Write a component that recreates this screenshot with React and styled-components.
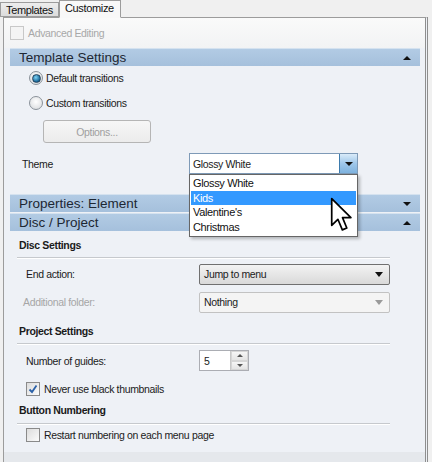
import React from 'react';
import styled, { createGlobalStyle } from 'styled-components';

const GlobalStyle = createGlobalStyle`
  html, body {
    margin: 0;
    padding: 0;
    background: #f0f0f0;
  }
  body {
    font-family: "Liberation Sans", Arial, sans-serif;
    font-size: 10.5px;
    letter-spacing: -0.35px;
    color: #1b1b1b;
  }
`;

// 전체 화면
const Screen = styled.div`
  position: relative;
  width: 432px;
  height: 462px;
  overflow: hidden;
  background: #f0f0f0;
`;

// 탭
const TabBar = styled.div`
  display: flex;
  align-items: flex-end;
  height: 17px;
  position: relative;
  z-index: 2;
`;

const Tab = styled.div`
  box-sizing: border-box;
  height: ${p => (p.$active ? 18 : 15)}px;
  padding: ${p => (p.$active ? '0 6px 3px 5px' : '0 5px')};
  display: flex;
  align-items: center;
  background: ${p => (p.$active ? '#f8f8f8' : 'linear-gradient(#ededed, #dcdcdc)')};
  border: 1px solid #9c9c9c;
  border-bottom: ${p => (p.$active ? '1px solid #f8f8f8' : '1px solid #9c9c9c')};
  margin-bottom: ${p => (p.$active ? '-1px' : '0')};
  font-size: 11px;
  color: #111;
`;

const Panel = styled.div`
  box-sizing: border-box;
  margin-left: 3px;
  width: 425px;
  height: 450px;
  border: 1px solid #9c9c9c;
  border-right: 3px double #8e8e8e;
  background: #eef1f6;
  display: flex;
  flex-direction: column;
`;

const TopArea = styled.div`
  height: 30px;
  background: linear-gradient(#fafafa, #f2f3f4);
  display: flex;
  align-items: center;
  padding-left: 6px;
  gap: 4px;
  color: #a8a8a8;
`;

const Box = styled.div`
  box-sizing: border-box;
  width: 14px;
  height: 14px;
  border: 1px solid ${p => (p.$disabled ? '#c8c8c8' : '#8a8a8a')};
  background: ${p => (p.$disabled ? '#f4f4f4' : 'linear-gradient(135deg, #dcdcdc, #fbfbfb)')};
  display: flex;
  align-items: center;
  justify-content: center;
  flex-shrink: 0;
`;

// 섹션 헤더
const SectionHeader = styled.div`
  box-sizing: border-box;
  margin: ${p => p.$gap || 0}px 5px 0 6px;
  height: 18px;
  background: linear-gradient(#b2cbe4, #a5c0dc);
  border-top: 1px solid #d5e2ef;
  display: flex;
  align-items: center;
  justify-content: space-between;
  padding: 0 9px 0 9px;
  font-size: 13.5px;
  letter-spacing: 0;
  color: #1d2733;
`;

const Arrow = styled.span`
  width: 0;
  height: 0;
  border-left: 4.5px solid transparent;
  border-right: 4.5px solid transparent;
  ${p => (p.$up ? 'border-bottom: 4.5px solid #111;' : 'border-top: 4.5px solid #111;')}
`;

const SectionBody = styled.div`
  margin: 0 5px 0 6px;
  display: flex;
  flex-direction: column;
`;

const RadioRow = styled.div`
  display: flex;
  align-items: center;
  gap: 3px;
  height: 14px;
  margin-top: ${p => p.$top}px;
  padding-left: 19px;
`;

const Radio = styled.div`
  box-sizing: border-box;
  width: 14px;
  height: 14px;
  border-radius: 50%;
  border: 1px solid #8a929a;
  background: radial-gradient(circle at 50% 40%, #ffffff, #d4d7da);
  display: flex;
  align-items: center;
  justify-content: center;
  &::after {
    content: '';
    display: ${p => (p.$checked ? 'block' : 'none')};
    width: 7px;
    height: 7px;
    border-radius: 50%;
    background: radial-gradient(circle at 40% 35%, #7fd3f5, #1b6b9c 65%, #0e3f66);
    border: 1px solid #24445f;
  }
`;

const OptionsButton = styled.div`
  box-sizing: border-box;
  margin: 10px 0 0 33px;
  width: 108px;
  height: 23px;
  border: 1px solid #b5b5b5;
  border-radius: 3px;
  background: linear-gradient(#f6f6f6, #ececec);
  color: #a0a0a0;
  display: flex;
  align-items: center;
  justify-content: center;
`;

const FieldRow = styled.div`
  display: flex;
  align-items: center;
  height: ${p => p.$h || 20}px;
  margin-top: ${p => p.$top}px;
  padding-left: ${p => p.$pad}px;
  color: ${p => (p.$muted ? '#a6a6a6' : '#1b1b1b')};
`;

const Label = styled.div`
  width: ${p => p.$w}px;
  flex-shrink: 0;
`;

const ThemeCombo = styled.div`
  position: relative;
  box-sizing: border-box;
  width: 169px;
  height: 21px;
  border: 1px solid #7e9ab7;
  background: #fff;
  display: flex;
  align-items: center;
  padding-left: 3px;
`;

const ComboButton = styled.div`
  position: absolute;
  right: 0;
  top: 0;
  bottom: 0;
  width: 18px;
  box-sizing: border-box;
  border-left: 1px solid #3d7bad;
  background: linear-gradient(#d9ebf9, #9fc7ea 50%, #7eb2de);
  display: flex;
  align-items: center;
  justify-content: center;
`;

const DropList = styled.div`
  position: absolute;
  left: 189px;
  top: 174px;
  width: 169px;
  box-sizing: border-box;
  border: 1px solid #666;
  background: #fff;
  padding: 1px 0 2px;
  box-shadow: 2px 2px 3px rgba(0, 0, 0, 0.25);
  z-index: 5;
`;

const DropItem = styled.div`
  height: 14.5px;
  line-height: 14.5px;
  padding-left: 2px;
  margin: 0 1px;
  font-size: 11px;
  background: ${p => (p.$selected ? '#3399ff' : 'transparent')};
  color: ${p => (p.$selected ? '#fff' : '#111')};
`;

const Pointer = styled.svg`
  position: absolute;
  left: 330px;
  top: 197px;
  z-index: 6;
`;

const GroupTitle = styled.div`
  font-weight: bold;
  font-size: 10.5px;
  letter-spacing: -0.35px;
  height: 14px;
  display: flex;
  align-items: center;
  padding-left: 9px;
  margin-top: ${p => p.$top}px;
  color: #1a1a1a;
`;

const Rule = styled.div`
  margin: ${p => p.$top || 5}px 0 0 7px;
  width: 373px;
  height: 1px;
  background: #c6c9cd;
  border-bottom: 1px solid #ffffff;
`;

const Select = styled.div`
  box-sizing: border-box;
  width: 191px;
  height: 21px;
  border: 1px solid ${p => (p.$disabled ? '#c2c2c2' : '#707070')};
  border-radius: 2px;
  background: ${p => (p.$disabled ? '#f4f4f4' : 'linear-gradient(#f3f3f3, #e6e6e6 50%, #d9d9d9)')};
  display: flex;
  align-items: center;
  justify-content: space-between;
  padding: 0 6px 0 4px;
  color: #1b1b1b;
`;

const SelectArrow = styled.span`
  width: 0;
  height: 0;
  border-left: 4px solid transparent;
  border-right: 4px solid transparent;
  border-top: 5px solid ${p => (p.$disabled ? '#9a9a9a' : '#111')};
`;

const Spin = styled.div`
  box-sizing: border-box;
  width: 50px;
  height: 21px;
  border: 1px solid #abadb3;
  background: #fff;
  display: flex;
  margin-left: 1px;
`;

const SpinText = styled.div`
  flex: 1;
  padding-left: 4px;
  display: flex;
  align-items: center;
`;

const SpinButtons = styled.div`
  width: 17px;
  display: flex;
  flex-direction: column;
  border-left: 1px solid #c8c8c8;
`;

const SpinBtn = styled.div`
  flex: 1;
  background: linear-gradient(#f6f6f6, #e4e4e4);
  border: 1px solid #d6d6d6;
  display: flex;
  align-items: center;
  justify-content: center;
  &::after {
    content: '';
    border-left: 3px solid transparent;
    border-right: 3px solid transparent;
    ${p => (p.$up ? 'border-bottom: 3px solid #555;' : 'border-top: 3px solid #555;')}
  }
`;

const CheckRow = styled.div`
  display: flex;
  align-items: center;
  gap: 4px;
  height: 14px;
  margin-top: ${p => p.$top}px;
  padding-left: 16px;
`;

const BottomBand = styled.div`
  margin-top: auto;
  height: 14px;
  background: #e5e8ec;
`;

const Check = () => (
  <svg width="10" height="10" viewBox="0 0 10 10">
    <path d="M1.5 5.5 L4 8 L8.5 1.5" fill="none" stroke="#2b61a8" strokeWidth="1.8" />
  </svg>
);

const App = () => {
  const themes = ['Glossy White', 'Kids', "Valentine's", 'Christmas'];

  return (
    <Screen>
      <GlobalStyle />
      <TabBar>
        <Tab>Templates</Tab>
        <Tab $active>Customize</Tab>
      </TabBar>
      <Panel>
        <TopArea>
          <Box $disabled />
          <span>Advanced Editing</span>
        </TopArea>

        <SectionHeader>
          <span>Template Settings</span>
          <Arrow $up />
        </SectionHeader>
        <SectionBody>
          <RadioRow $top={5}>
            <Radio $checked />
            <span>Default transitions</span>
          </RadioRow>
          <RadioRow $top={11}>
            <Radio />
            <span>Custom transitions</span>
          </RadioRow>
          <OptionsButton>Options...</OptionsButton>
          <FieldRow $top={10} $pad={12} $h={21}>
            <Label $w={167}>Theme</Label>
            <ThemeCombo>
              Glossy White
              <ComboButton>
                <Arrow />
              </ComboButton>
            </ThemeCombo>
          </FieldRow>
        </SectionBody>

        <SectionHeader $gap={20}>
          <span>Properties: Element</span>
          <Arrow />
        </SectionHeader>
        <SectionHeader $gap={1}>
          <span>Disc / Project</span>
          <Arrow $up />
        </SectionHeader>

        <SectionBody>
          <GroupTitle $top={7}>Disc Settings</GroupTitle>
          <Rule $top={5} />
          <FieldRow $top={5} $pad={16}>
            <Label $w={173}>End action:</Label>
            <Select>
              Jump to menu
              <SelectArrow />
            </Select>
          </FieldRow>
          <FieldRow $top={8} $pad={13} $muted>
            <Label $w={176}>Additional folder:</Label>
            <Select $disabled>
              Nothing
              <SelectArrow $disabled />
            </Select>
          </FieldRow>
          <GroupTitle $top={12}>Project Settings</GroupTitle>
          <Rule $top={5} />
          <FieldRow $top={5} $pad={16} $h={21}>
            <Label $w={172}>Number of guides:</Label>
            <Spin>
              <SpinText>5</SpinText>
              <SpinButtons>
                <SpinBtn $up />
                <SpinBtn />
              </SpinButtons>
            </Spin>
          </FieldRow>
          <CheckRow $top={11}>
            <Box>
              <Check />
            </Box>
            <span>Never use black thumbnails</span>
          </CheckRow>
          <GroupTitle $top={7}>Button Numbering</GroupTitle>
          <Rule $top={6} />
          <CheckRow $top={3}>
            <Box />
            <span>Restart numbering on each menu page</span>
          </CheckRow>
        </SectionBody>
        <BottomBand />
      </Panel>

      <DropList>
        {themes.map(t => (
          <DropItem key={t} $selected={t === 'Kids'}>
            {t}
          </DropItem>
        ))}
      </DropList>

      <Pointer width="24" height="36" viewBox="0 0 14 21">
        <path
          d="M1 1 L1 16.5 L4.6 13 L7.2 19.2 L9.8 18.1 L7.3 12 L12.2 12 Z"
          fill="#fff"
          stroke="#000"
          strokeWidth="1"
          strokeLinejoin="round"
        />
      </Pointer>
    </Screen>
  );
};

export default App;
